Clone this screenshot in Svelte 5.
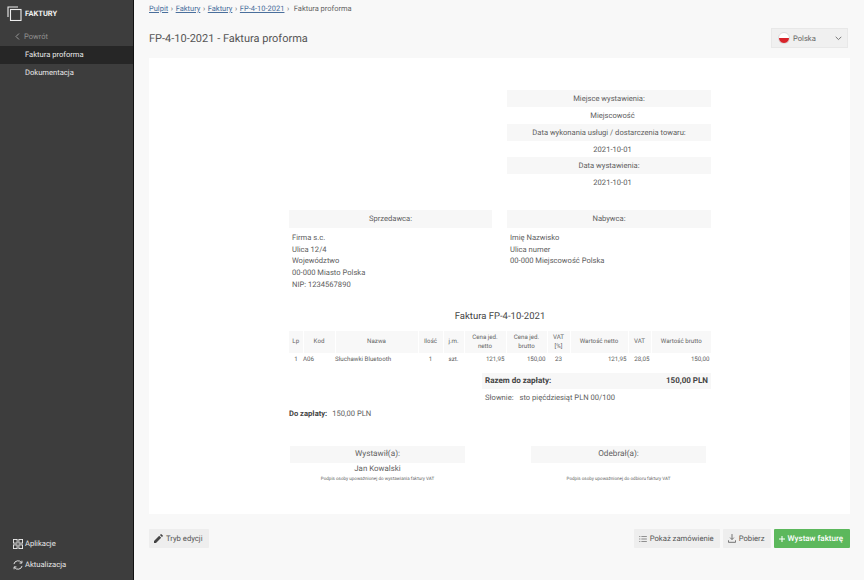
<script lang="ts">
	const columns = [
		{ label: 'Lp', width: 14 },
		{ label: 'Kod', width: 32 },
		{ label: 'Nazwa', width: 83 },
		{ label: 'Ilość', width: 25 },
		{ label: 'j.m.', width: 21 },
		{ label: 'Cena jed. netto', width: 42 },
		{ label: 'Cena jed. brutto', width: 41 },
		{ label: 'VAT [%]', width: 23 },
		{ label: 'Wartość netto', width: 58 },
		{ label: 'VAT', width: 23 },
		{ label: 'Wartość brutto', width: 60 }
	];
	const crumbs = ['Pulpit', 'Faktury', 'Faktury', 'FP-4-10-2021'];
	const seller = ['Firma s.c.', 'Ulica 12/4', 'Województwo', '00-000 Miasto Polska', 'NIP: 1234567890'];
	const buyer = ['Imię Nazwisko', 'Ulica numer', '00-000 Miejscowość Polska'];
</script>

<div class="layout">
	<aside class="sidebar">
		<div class="brand">
			<svg width="15" height="15" viewBox="0 0 15 15" fill="none" stroke="#eee" stroke-width="1.1">
				<path d="M1 11V1h10" />
				<rect x="3.5" y="3.5" width="10.5" height="11" />
			</svg>
			<span>FAKTURY</span>
		</div>
		<div class="back">
			<svg width="5" height="7" viewBox="0 0 5 7" fill="none" stroke="#999" stroke-width="1"><path d="M4 .5 1 3.5l3 3" /></svg>
			<span>Powrót</span>
		</div>
		<div class="nav-item active">Faktura proforma</div>
		<div class="nav-item">Dokumentacja</div>

		<div class="sidebar-bottom">
			<div class="side-link">
				<svg width="10" height="10" viewBox="0 0 11 11" fill="none" stroke="#eee" stroke-width="1">
					<rect x=".5" y=".5" width="4" height="4" /><rect x="6.5" y=".5" width="4" height="4" />
					<rect x=".5" y="6.5" width="4" height="4" /><rect x="6.5" y="6.5" width="4" height="4" />
				</svg>
				<span>Aplikacje</span>
			</div>
			<div class="side-link">
				<svg width="10" height="10" viewBox="0 0 11 11" fill="none" stroke="#eee" stroke-width="1">
					<path d="M1 4.500A4.600 4.600 0 0 1 9.400 3M10 6.500A4.600 4.600 0 0 1 1.600 8" />
					<path d="M9.800.8v2.600H7.200M1.200 10.200V7.600h2.600" />
				</svg>
				<span>Aktualizacja</span>
			</div>
		</div>
	</aside>

	<main class="main">
		<nav class="crumbs">
			{#each crumbs as crumb}
				<a href="#top">{crumb}</a><span class="sep">›</span>
			{/each}
			<span>Faktura proforma</span>
		</nav>

		<header class="head">
			<h1>FP-4-10-2021 - Faktura proforma</h1>
			<div class="lang">
				<span class="flag"></span>
				<span class="lang-name">Polska</span>
				<svg width="7" height="5" viewBox="0 0 7 5" fill="none" stroke="#777" stroke-width="1"><path d="M.7.8 3.500 3.600 6.300.8" /></svg>
			</div>
		</header>

		<section class="card">
			<div class="invoice">
				<div class="meta">
					<div class="label">Miejsce wystawienia:</div>
					<div class="value">Miejscowość</div>
					<div class="label">Data wykonania usługi / dostarczenia towaru:</div>
					<div class="value">2021-10-01</div>
					<div class="label">Data wystawienia:</div>
					<div class="value">2021-10-01</div>
				</div>

				<div class="parties">
					<div>
						<div class="label tall">Sprzedawca:</div>
						<div class="address">
							{#each seller as line}<div>{line}</div>{/each}
						</div>
					</div>
					<div>
						<div class="label tall">Nabywca:</div>
						<div class="address">
							{#each buyer as line}<div>{line}</div>{/each}
						</div>
					</div>
				</div>

				<h2>Faktura FP-4-10-2021</h2>

				<table>
					<thead>
						<tr>
							{#each columns as col}
								<th style="width: {col.width}px">{col.label}</th>
							{/each}
						</tr>
					</thead>
					<tbody>
						<tr>
							<td class="c">1</td>
							<td>A06</td>
							<td>Słuchawki Bluetooth</td>
							<td class="c">1</td>
							<td class="c">szt.</td>
							<td class="r">121,95</td>
							<td class="r">150,00</td>
							<td class="c">23</td>
							<td class="r">121,95</td>
							<td class="r">28,05</td>
							<td class="r">150,00</td>
						</tr>
					</tbody>
				</table>

				<div class="summary">
					<div class="total"><span>Razem do zapłaty:</span><span>150,00 PLN</span></div>
					<div class="words"><span>Słownie:</span><span>sto pięćdziesiąt PLN 00/100</span></div>
				</div>

				<div class="to-pay"><b>Do zapłaty:</b><span>150,00 PLN</span></div>

				<div class="signs">
					<div class="sign">
						<div class="label sign-label">Wystawił(a):</div>
						<div class="sign-name">Jan Kowalski</div>
						<div class="sign-note">Podpis osoby upoważnionej do wystawiania faktury VAT</div>
					</div>
					<div class="sign">
						<div class="label sign-label">Odebrał(a):</div>
						<div class="sign-name"></div>
						<div class="sign-note">Podpis osoby upoważnionej do odbioru faktury VAT</div>
					</div>
				</div>
			</div>
		</section>

		<footer class="actions">
			<button class="btn">
				<svg width="9" height="9" viewBox="0 0 9 9" fill="#444"><path d="M0 9V7l5.200-5.200 2 2L2 9zM5.900 1.100 6.800.2q.3-.3.6 0l1.400 1.400q.3.3 0 .6l-.9.9z" /></svg>
				Tryb edycji
			</button>
			<div class="actions-right">
				<button class="btn">
					<svg width="8" height="6" viewBox="0 0 9 7" fill="none" stroke="#777" stroke-width="1"><path d="M0 .5h1.400M2.600.5H9M0 3.500h1.400M2.600 3.500H9M0 6.500h1.400M2.600 6.500H9" /></svg>
					Pokaż zamówienie
				</button>
				<button class="btn">
					<svg width="8" height="9" viewBox="0 0 9 10" fill="none" stroke="#666" stroke-width="1"><path d="M4.500 0v6M2.400 4 4.500 6.200 6.600 4" /><path d="M.5 7v2.300h8V7" /></svg>
					Pobierz
				</button>
				<button class="btn primary">
					<svg width="6" height="6" viewBox="0 0 7 7" stroke="#fff" stroke-width="1.200"><path d="M3.500 0v7M0 3.500h7" /></svg>
					Wystaw fakturę
				</button>
			</div>
		</footer>
	</main>
</div>

<style>
	:global(body) {
		margin: 0;
		font-family: Roboto, 'Liberation Sans', sans-serif;
		color: #555;
		text-rendering: geometricPrecision;
	}
	.layout {
		display: flex;
		width: 864px;
		height: 580px;
		overflow: hidden;
		background: #f8f8f8;
	}
	.sidebar {
		width: 133px;
		flex: none;
		display: flex;
		flex-direction: column;
		background: #3d3d3d;
		border-right: 1px solid #111;
		color: #e8e8e8;
		font-size: 7.600px;
	}
	.brand {
		display: flex;
		align-items: center;
		gap: 3px;
		height: 26px;
		padding: 0 0 0 7px;
		font-weight: 700;
		font-size: 7.500px;
		color: #f2f2f2;
	}
	.back {
		display: flex;
		align-items: center;
		gap: 4px;
		height: 20px;
		padding-left: 15px;
		color: #8f8f8f;
	}
	.nav-item {
		height: 18px;
		line-height: 18px;
		padding-left: 25px;
	}
	.nav-item.active {
		background: #262626;
	}
	.sidebar-bottom {
		margin-top: auto;
		padding-bottom: 5px;
	}
	.side-link {
		display: flex;
		align-items: center;
		gap: 2px;
		height: 21px;
		padding-left: 13px;
	}
	.main {
		flex: 1;
		min-width: 0;
		padding: 0 14px 0 15px;
	}
	.crumbs {
		height: 18px;
		line-height: 17px;
		font-size: 7.500px;
		color: #666;
	}
	.crumbs a {
		color: #4a6f9c;
	}
	.sep {
		margin: 0 2.600px;
	}
	.head {
		display: flex;
		align-items: center;
		justify-content: space-between;
		height: 40px;
		padding-right: 2px;
	}
	h1 {
		margin: 0;
		font-size: 11px;
		font-weight: 400;
		color: #555;
	}
	.lang {
		display: flex;
		align-items: center;
		width: 77px;
		height: 20px;
		box-sizing: border-box;
		padding: 0 5px 0 6px;
		background: #f0f0f0;
		border: 1px solid #e8e8e8;
		font-size: 7.600px;
		color: #666;
	}
	.lang-name {
		flex: 1;
		margin-left: 3px;
	}
	.flag {
		width: 12px;
		height: 12px;
		border-radius: 50%;
		background: linear-gradient(#fff 50%, #d8232a 50%);
		border: 0.5px solid #ddd;
		box-sizing: border-box;
	}
	.card {
		height: 456px;
		box-sizing: border-box;
		padding-top: 32px;
		background: #fff;
	}
	.invoice {
		width: 422px;
		margin-left: 140px;
		font-size: 7.600px;
		color: #606060;
	}
	.meta {
		width: 204px;
		margin-left: auto;
		height: 120px;
	}
	.label {
		background: #f7f7f7;
		text-align: center;
		height: 17px;
		line-height: 17px;
		font-size: 7.600px;
	}
	.label.tall {
		height: 18px;
		line-height: 18px;
	}
	.value {
		height: 16.500px;
		line-height: 17.500px;
		padding-left: 7px;
		text-align: center;
	}
	.parties {
		display: grid;
		grid-template-columns: 203px 204px;
		gap: 15px;
	}
	.address {
		padding: 4px 3px 0;
		line-height: 11.700px;
	}
	h2 {
		margin: 20px 0 0;
		height: 20px;
		font-size: 9.500px;
		font-weight: 400;
		text-align: center;
		color: #444;
	}
	table {
		width: 422px;
		table-layout: fixed;
		border-collapse: collapse;
		margin: 0;
		font-size: 6.200px;
	}
	th {
		box-sizing: border-box;
		height: 22px;
		padding: 0 3px;
		background: #f8f8f8;
		border-right: 1.500px solid #fff;
		font-weight: 400;
		line-height: 8.500px;
		color: #666;
	}
	th:last-child {
		border-right: 0;
	}
	td {
		box-sizing: border-box;
		height: 11px;
		padding: 1px 0 0;
		color: #606060;
	}
	td.c {
		text-align: center;
	}
	td.r {
		text-align: right;
		padding-right: 1.500px;
	}
	.summary {
		width: 229px;
		margin: 9px 0 0 auto;
	}
	.total {
		display: flex;
		justify-content: space-between;
		height: 16px;
		line-height: 16px;
		padding: 0 3px;
		background: #f7f7f7;
		font-size: 8px;
		font-weight: 700;
		color: #444;
	}
	.words {
		display: flex;
		gap: 6px;
		height: 20px;
		line-height: 18px;
		padding-left: 3px;
	}
	.to-pay {
		display: flex;
		gap: 5px;
		line-height: 10px;
		height: 10px;
	}
	.to-pay b {
		color: #444;
	}
	.signs {
		display: flex;
		justify-content: space-between;
		margin-top: 27px;
		padding: 0 5px 0 1px;
	}
	.sign {
		width: 175px;
		text-align: center;
	}
	.sign-label {
		font-size: 8.200px;
	}
	.sign-name {
		height: 12px;
		line-height: 12px;
		font-size: 7.900px;
	}
	.sign-note {
		margin-top: 1px;
		font-size: 4.550px;
		line-height: 8px;
		color: #666;
	}
	.actions {
		display: flex;
		justify-content: space-between;
		margin-top: 15px;
	}
	.actions-right {
		display: flex;
		gap: 3px;
	}
	.btn {
		display: flex;
		align-items: center;
		gap: 3px;
		height: 19px;
		padding: 0 6px 0 5px;
		border: 0;
		border-radius: 1px;
		background: #eee;
		color: #555;
		font: 400 7.700px Roboto, 'Liberation Sans', sans-serif;
		text-rendering: geometricPrecision;
	}
	.btn.primary {
		padding: 0 7px 0 5px;
		background: #5cb85c;
		color: #fff;
		font-size: 8px;
		font-weight: 500;
	}
</style>
